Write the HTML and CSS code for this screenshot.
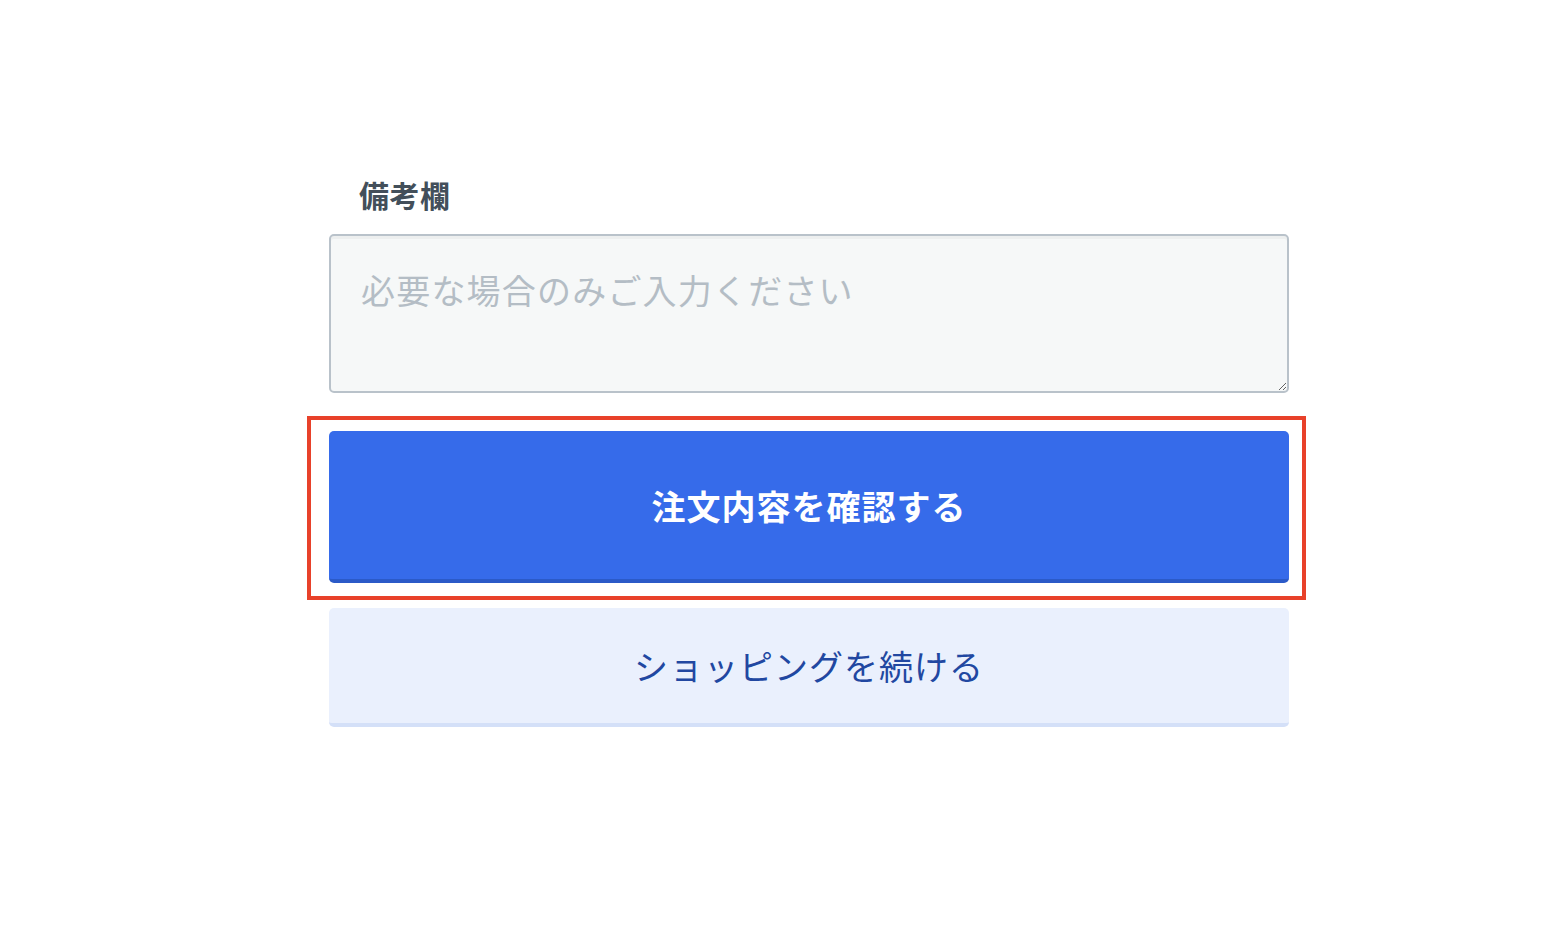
FILE: index.html
```html
<!DOCTYPE html>
<html lang="ja">
<head>
<meta charset="utf-8">
<link rel="stylesheet" href="styles.css">
</head>
<body>
<div class="form">
  <label class="label" for="note">備考欄</label>
  <textarea id="note" class="note" placeholder="必要な場合のみご入力ください"></textarea>
  <div class="confirm-wrap">
    <button class="btn btn-primary">注文内容を確認する</button>
    <div class="highlight"></div>
  </div>
  <button class="btn btn-secondary">ショッピングを続ける</button>
</div>
</body>
</html>
```

FILE: styles.css
```css
html, body {
  margin: 0;
  padding: 0;
  background: #ffffff;
}
body {
  font-family: "Noto Sans CJK JP", "Noto Sans", sans-serif;
}
.form {
  width: 960px;
  margin-left: 329px;
  padding-top: 174px;
  display: flex;
  flex-direction: column;
}
.label {
  display: block;
  padding-left: 30px;
  font-size: 30px;
  letter-spacing: 0.5px;
  line-height: 40px;
  font-weight: 700;
  color: #434f5a;
  margin-bottom: 20px;
}
.note {
  box-sizing: border-box;
  width: 960px;
  height: 159px;
  margin: 0;
  border: 2px solid #b9c2ca;
  border-radius: 5px;
  background: #f6f8f8;
  box-shadow: inset 0 3px 0 rgba(0, 0, 0, 0.035);
  padding: 30px 30px;
  font-family: inherit;
  font-size: 34px;
  letter-spacing: 1.2px;
  line-height: 48px;
  color: #333;
  resize: vertical;
  outline: none;
}
.note::placeholder {
  color: #b4bdc5;
}
.confirm-wrap {
  position: relative;
  margin-top: 38px;
}
.btn {
  box-sizing: border-box;
  display: block;
  width: 960px;
  margin: 0;
  border: none;
  border-radius: 5px;
  font-family: inherit;
  font-size: 34px;
  letter-spacing: 1px;
  cursor: pointer;
}
.btn-primary {
  height: 152px;
  background: #366bea;
  border-bottom: 4px solid #2b5ac8;
  color: #ffffff;
  font-weight: 700;
}
.btn-secondary {
  margin-top: 25px;
  height: 119px;
  background: #eaf0fd;
  border-bottom: 4px solid #d4e0f8;
  color: #2147a1;
  font-weight: 400;
}
.highlight {
  position: absolute;
  left: -22px;
  top: -15px;
  width: 999px;
  height: 184px;
  box-sizing: border-box;
  border: 4px solid #e8412a;
  pointer-events: none;
}
```
